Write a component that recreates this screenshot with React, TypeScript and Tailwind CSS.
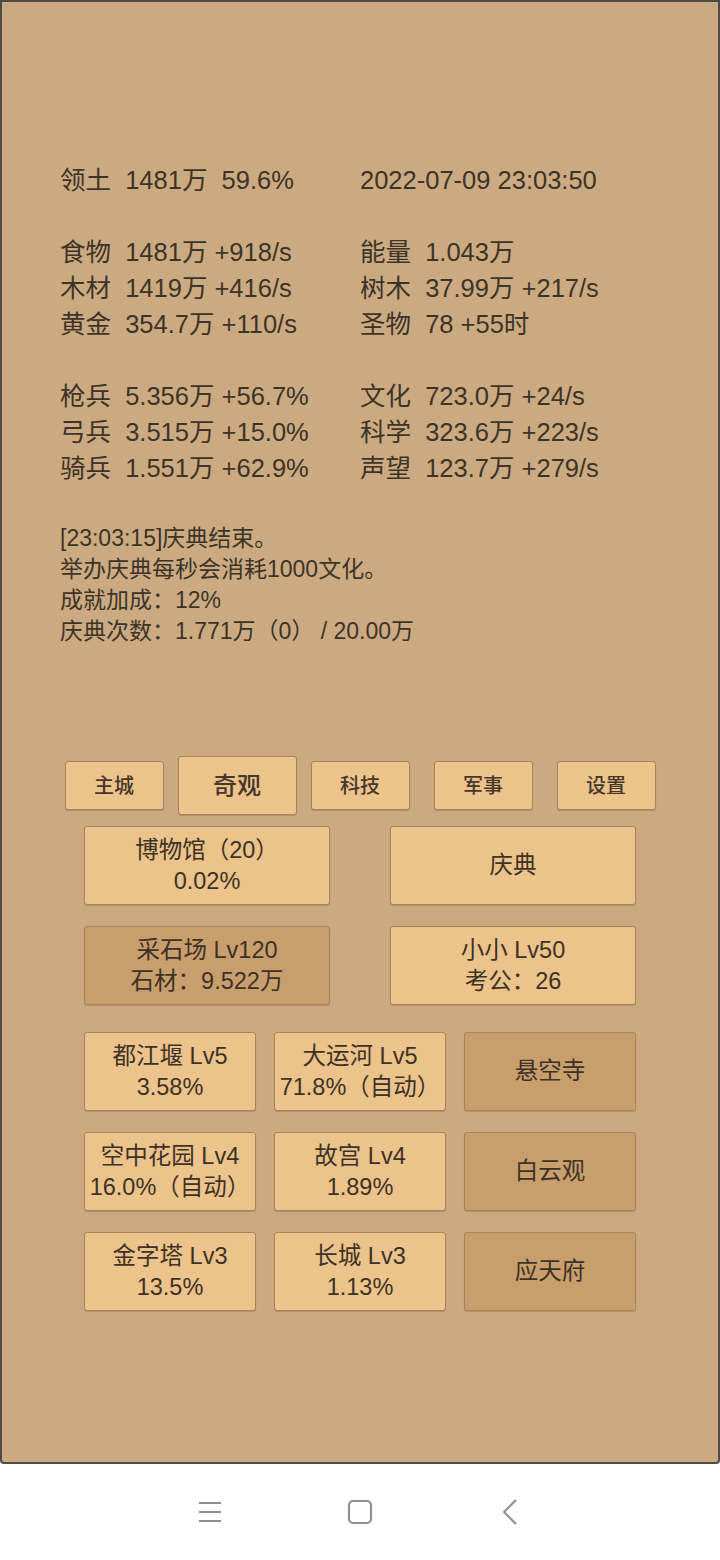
import React from "react";

const font = { fontFamily: '"Liberation Sans", "Noto Sans CJK SC", sans-serif' };

const leftStats = [
  "领土  1481万  59.6%",
  "",
  "食物  1481万 +918/s",
  "木材  1419万 +416/s",
  "黄金  354.7万 +110/s",
  "",
  "枪兵  5.356万 +56.7%",
  "弓兵  3.515万 +15.0%",
  "骑兵  1.551万 +62.9%",
];

const rightStats = [
  "2022-07-09 23:03:50",
  "",
  "能量  1.043万",
  "树木  37.99万 +217/s",
  "圣物  78 +55时",
  "",
  "文化  723.0万 +24/s",
  "科学  323.6万 +223/s",
  "声望  123.7万 +279/s",
];

const logs = [
  "[23:03:15]庆典结束。",
  "举办庆典每秒会消耗1000文化。",
  "成就加成：12%",
  "庆典次数：1.771万（0） / 20.00万",
];

const tabs = ["主城", "奇观", "科技", "军事", "设置"];

type Btn = { lines: string[]; dark?: boolean };

const wonders: Btn[] = [
  { lines: ["都江堰 Lv5", "3.58%"] },
  { lines: ["大运河 Lv5", "71.8%（自动）"] },
  { lines: ["悬空寺"], dark: true },
  { lines: ["空中花园 Lv4", "16.0%（自动）"] },
  { lines: ["故宫 Lv4", "1.89%"] },
  { lines: ["白云观"], dark: true },
  { lines: ["金字塔 Lv3", "13.5%"] },
  { lines: ["长城 Lv3", "1.13%"] },
  { lines: ["应天府"], dark: true },
];

const GameButton: React.FC<{ btn: Btn; wide?: boolean }> = ({ btn, wide }) => (
  <div
    className={`${wide ? "w-[246px]" : "w-[172px]"} h-[79px] flex flex-col items-center justify-center rounded-[3px] border border-[#a8845c] shadow-[0_1px_1px_rgba(90,60,30,0.25)] text-[23.5px] leading-[31px] text-[#3d3226] whitespace-pre ${
      btn.dark ? "bg-[#c99e6d]" : "bg-[#ecc38a]"
    }`}
  >
    {btn.lines.map((l, i) => (
      <span key={i}>{l}</span>
    ))}
  </div>
);

export default function App() {
  return (
    <div className="w-[720px] h-[1560px] flex flex-col bg-white" style={font}>
      {/* game panel */}
      <div className="h-[1464px] shrink-0 bg-[#cbaa82] border-2 border-[#4e4a45] rounded-b-[4px] flex flex-col">
        {/* stats */}
        <div className="mt-[160px] ml-[58px] flex text-[25.5px] leading-[36px] text-[#3d3427] whitespace-pre">
          <div className="w-[300px] flex flex-col">
            {leftStats.map((s, i) => (
              <div key={i} className="h-[36px]">{s}</div>
            ))}
          </div>
          <div className="flex flex-col">
            {rightStats.map((s, i) => (
              <div key={i} className="h-[36px]">{s}</div>
            ))}
          </div>
        </div>

        {/* log */}
        <div className="mt-[37px] ml-[58px] flex flex-col text-[23px] leading-[31px] text-[#3d3427] whitespace-pre">
          {logs.map((l, i) => (
            <div key={i}>{l}</div>
          ))}
        </div>

        {/* tabs */}
        <div className="mt-[109px] flex justify-center items-center h-[59px]">
          {tabs.map((t) => {
            const active = t === "奇观";
            return (
              <div key={t} className="w-[123px] flex justify-center">
                <div
                  className={`flex items-center justify-center rounded-[3px] border border-[#a8845c] shadow-[0_1px_1px_rgba(90,60,30,0.25)] bg-[#ecc38a] text-[#45372a] font-medium ${
                    active ? "w-[119px] h-[59px] text-[24px]" : "w-[99px] h-[49px] text-[20px]"
                  }`}
                >
                  {t}
                </div>
              </div>
            );
          })}
        </div>

        {/* museum / celebration */}
        <div className="mt-[11px] flex justify-center gap-[60px]">
          <GameButton wide btn={{ lines: ["博物馆（20）", "0.02%"] }} />
          <GameButton wide btn={{ lines: ["庆典"] }} />
        </div>
        <div className="mt-[21px] flex justify-center gap-[60px]">
          <GameButton wide btn={{ lines: ["采石场 Lv120", "石材：9.522万"], dark: true }} />
          <GameButton wide btn={{ lines: ["小小 Lv50", "考公：26"] }} />
        </div>

        {/* wonders */}
        <div className="mt-[27px] mx-auto grid grid-cols-[172px_172px_172px] gap-x-[18px] gap-y-[21px]">
          {wonders.map((w, i) => (
            <GameButton key={i} btn={w} />
          ))}
        </div>
      </div>

      {/* android nav bar */}
      <div className="flex-1 flex items-center justify-center">
        <div className="w-[150px] flex justify-center">
          <svg width="24" height="22" viewBox="0 0 24 22" fill="none" stroke="#8f8f8f" strokeWidth="2">
            <line x1="1" y1="2" x2="23" y2="2" />
            <line x1="1" y1="11" x2="23" y2="11" />
            <line x1="1" y1="20" x2="23" y2="20" />
          </svg>
        </div>
        <div className="w-[150px] flex justify-center">
          <svg width="26" height="26" viewBox="0 0 26 26" fill="none" stroke="#8f8f8f" strokeWidth="2.2">
            <rect x="2" y="2" width="22" height="22" rx="4" />
          </svg>
        </div>
        <div className="w-[150px] flex justify-center">
          <svg width="18" height="26" viewBox="0 0 18 26" fill="none" stroke="#8f8f8f" strokeWidth="2">
            <polyline points="15,1 3,13 15,25" />
          </svg>
        </div>
      </div>
    </div>
  );
}
